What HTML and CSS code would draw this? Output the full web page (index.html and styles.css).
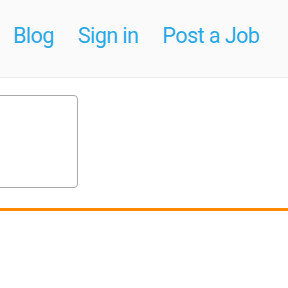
FILE: index.html
```html
<!DOCTYPE html>
<html lang="en">
<head>
    <meta charset="UTF-8">
    <meta name="viewport" content="width=device-width, initial-scale=1.0">
    <title>Jobs</title>
    <link rel="stylesheet" href="styles.css">
</head>
<body>
    <!-- Header -->
    <div class="header">
        <a href="#" class="nav-link">Blog</a>
        <a href="#" class="nav-link">Sign in</a>
        <a href="#" class="nav-link">Post a Job</a>
    </div>

    <!-- Search -->
    <div class="search">
        <div class="search-box"></div>
    </div>

    <div class="divider"></div>
</body>
</html>
```

FILE: styles.css
```css
body {
    font-family: 'Roboto', sans-serif;
    background-color: white;
    margin: 0;
}
.header {
    height: 77px;
    background-color: #fafafa;
    border-bottom: 1px solid #ececec;
    display: flex;
    align-items: center;
    gap: 24px;
    padding-left: 13px;
}
.nav-link {
    color: #29a8e6;
    font-size: 21.5px;
    letter-spacing: -0.55px;
    text-decoration: none;
    margin-top: -6px;
}
.search {
    padding-top: 17px;
}
.search-box {
    width: 99px;
    height: 91px;
    margin-left: -23px;
    border: 1px solid #a9a9a9;
    border-radius: 4px;
    background-color: white;
}
.divider {
    margin-top: 20px;
    height: 3px;
    background-color: #ff8a00;
}
```
